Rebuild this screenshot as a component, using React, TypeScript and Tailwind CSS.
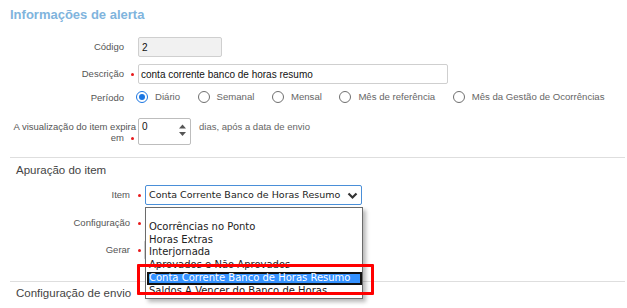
import React from 'react';

const Dot = () => <span className="block w-[3px] h-[3px] rounded-full bg-[#e8191b]" />;

function FieldLabel({ text, required }: { text: string; required?: boolean }) {
  return (
    <div className="w-[128px] shrink-0 flex items-center justify-end text-[9.5px] text-[#555]">
      <span>{text}</span>
      <span className="w-[14px] h-[10px] flex items-center pl-[7px]">{required && <Dot />}</span>
    </div>
  );
}

function ItemLabel({ text }: { text: string }) {
  return (
    <div className="w-[135px] shrink-0 flex items-center justify-end text-[9.5px] text-[#555]">
      <span>{text}</span>
      <span className="w-[15px] h-[10px] flex items-center pl-[8px]">
        <Dot />
      </span>
    </div>
  );
}

function Radio({ label, checked }: { label: string; checked?: boolean }) {
  return (
    <div className="flex items-center gap-[7px]">
      {checked ? (
        <span className="w-[12px] h-[12px] rounded-full border-[1.5px] border-[#1b76e2] flex items-center justify-center">
          <span className="w-[6px] h-[6px] rounded-full bg-[#1b76e2]" />
        </span>
      ) : (
        <span className="w-[12px] h-[12px] rounded-full border border-[#6f6f6f] bg-white" />
      )}
      <span className="text-[9.6px] text-[#666]">{label}</span>
    </div>
  );
}

const options = [
  '',
  'Ocorrências no Ponto',
  'Horas Extras',
  'Interjornada',
  'Aprovados e Não Aprovados',
  'Conta Corrente Banco de Horas Resumo',
  'Saldos A Vencer do Banco de Horas',
];

export default function App() {
  const selected = 'Conta Corrente Banco de Horas Resumo';

  return (
    <div
      className="relative w-[627px] h-[308px] overflow-hidden bg-white pl-[10px] pr-[2px] pt-[7px]"
      style={{ fontFamily: '"Liberation Sans", Arial, sans-serif' }}
    >
      <h1 className="h-[16px] leading-[16px] text-[13px] font-bold text-[#80b4dd]">Informações de alerta</h1>

      {/* Código */}
      <div className="flex mt-[14px] h-[20px]">
        <FieldLabel text="Código" />
        <div className="w-[84px] h-[20px] border border-[#cfcfcf] bg-[#f1f1f1] rounded-[2px] pl-[3px] flex items-center text-[10px] text-[#111]">
          2
        </div>
      </div>

      {/* Descrição */}
      <div className="flex mt-[7px] h-[20px]">
        <FieldLabel text="Descrição" required />
        <div className="w-[310px] h-[20px] border border-[#cfcfcf] bg-white rounded-[2px] pl-[2px] flex items-center text-[10px] text-[#111]">
          conta corrente banco de horas resumo
        </div>
      </div>

      {/* Período */}
      <div className="flex mt-[6px] h-[16px] items-center">
        <FieldLabel text="Período" />
        <div className="flex items-center gap-[17.5px] ml-[-2px] mt-[-2px]">
          <Radio label="Diário" checked />
          <Radio label="Semanal" />
          <Radio label="Mensal" />
          <Radio label="Mês de referência" />
          <Radio label="Mês da Gestão de Ocorrências" />
        </div>
      </div>

      {/* Expira */}
      <div className="flex mt-[12px] items-start">
        <div className="w-[128px] shrink-0 pr-[2px] pt-[3px] text-right text-[9.5px] leading-[11px] text-[#555]">
          A visualização do item expira
          <br />
          em
          <span className="inline-flex w-[12px] h-[8px] items-center pl-[7px] align-middle">
            <Dot />
          </span>
        </div>
        <div className="relative w-[53px] h-[27px] border border-[#bdbdbd] rounded-[2px] bg-white pl-[3px] pt-[2px] text-[10px] leading-[12px] text-[#111]">
          0
          <svg className="absolute right-[3px] top-[4px]" width="9" height="14" viewBox="0 0 9 14">
            <path d="M1 5.5 L4.5 1.5 L8 5.5 Z" fill="#555" />
            <path d="M1 9 L4.5 13 L8 9 Z" fill="#555" />
          </svg>
        </div>
        <span className="ml-[8px] mt-[3px] text-[9.5px] leading-[12px] text-[#666]">dias, após a data de envio</span>
      </div>

      <div className="mt-[12px] h-px bg-[#dedede]" />

      <h2 className="mt-[5px] ml-[6px] h-[14px] leading-[14px] text-[11.5px] text-[#444]">Apuração do item</h2>

      {/* Item */}
      <div className="flex mt-[8px] h-[20px]">
        <ItemLabel text="Item" />
        <div
          className="relative w-[217px] h-[20px] border border-[#4a8fd8] rounded-[2px] bg-white flex items-center pl-[3px] text-[9.5px] text-[#222] whitespace-nowrap"
          style={{ fontFamily: '"DejaVu Sans", Verdana, sans-serif' }}
        >
          <span>{selected}</span>
          <svg className="absolute right-[3px] top-[6px]" width="11" height="8" viewBox="0 0 11 8">
            <path d="M1.5 1.5 L5.5 5.5 L9.5 1.5" fill="none" stroke="#333" strokeWidth="2.2" />
          </svg>
        </div>
      </div>

      {/* Configuração */}
      <div className="flex mt-[8px] h-[20px]">
        <ItemLabel text="Configuração" />
        <div className="w-[217px] h-[20px] border border-[#cfcfcf] rounded-[2px] bg-white" />
      </div>

      {/* Gerar */}
      <div className="flex mt-[7px] h-[20px]">
        <ItemLabel text="Gerar" />
        <div className="w-[217px] h-[20px] ml-[-1px] border border-[#cfcfcf] rounded-[2px] bg-white" />
      </div>

      <div className="mt-[21px] h-px bg-[#dedede]" />

      <h2 className="mt-[4px] ml-[6px] h-[14px] leading-[14px] text-[11.5px] text-[#444]">Configuração de envio</h2>

      {/* open select list */}
      <div
        className="absolute left-[145px] top-[207px] w-[218px] h-[92px] border border-[#6b6b6b] bg-white shadow-[3px_3px_4px_rgba(0,0,0,0.28)] text-[10px] text-[#222]"
        style={{ fontFamily: '"DejaVu Sans", Verdana, sans-serif' }}
      >
        {options.map((o, i) => (
          <div
            key={i}
            className={
              o === selected
                ? 'h-[12.8px] leading-[12.8px] pl-[2px] ml-[1px] bg-[#3391ff] text-white shadow-[inset_0_0_0_2px_#111] whitespace-nowrap'
                : 'h-[12.8px] leading-[12.8px] pl-[3px] whitespace-nowrap'
            }
          >
            {o}
          </div>
        ))}
      </div>

      {/* highlight box */}
      <div className="absolute left-[137px] top-[264px] w-[237px] h-[31px] border-[3px] border-[#ff0000] rounded-[1px]" />
    </div>
  );
}
